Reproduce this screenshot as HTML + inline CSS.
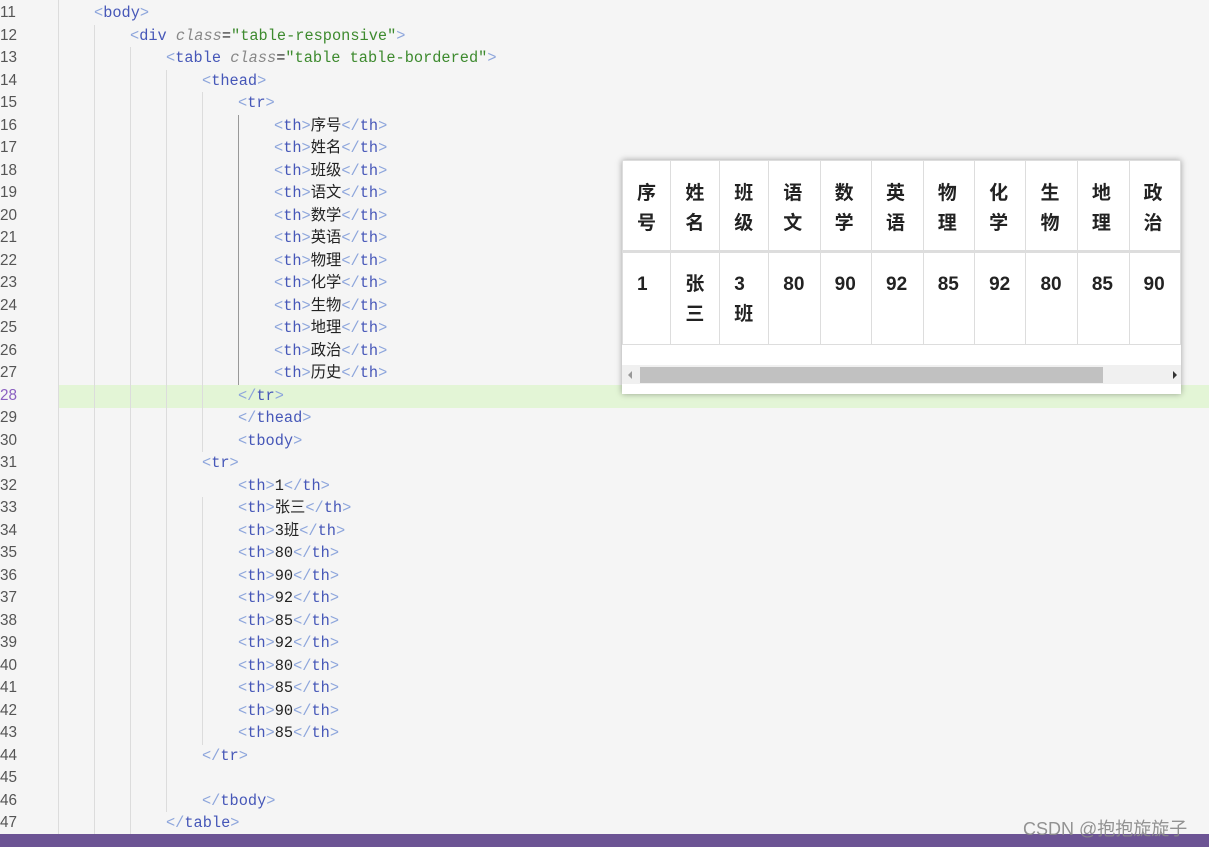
<!DOCTYPE html>
<html><head><meta charset="utf-8"><style>
body{margin:0;width:1209px;height:847px;background:#f5f5f5;overflow:hidden;position:relative;font-family:"Liberation Mono","Noto Sans CJK SC",monospace;}
.ln{position:absolute;left:0;height:22.5px;line-height:22.5px;font-size:15.3px;color:#555;font-family:"Liberation Sans",sans-serif;}
.cl{position:absolute;height:22.5px;line-height:22.5px;font-size:15.3px;color:#222;white-space:pre;}
.b{color:#8ea6dc}.t{color:#4657b8}.a{color:#888;font-style:italic}.s{color:#3d8a2e}
.g{position:absolute;width:1px;background:#dcdcdc}
.hl{position:absolute;left:58px;right:0;top:385px;height:22.5px;background:#e3f5d6}
.panel{position:absolute;left:622px;top:160px;width:559px;height:234px;background:#fff;box-shadow:0 0 6px rgba(0,0,0,.35);overflow:hidden}
table{border-collapse:collapse;position:absolute;left:0;top:0;font-family:"Liberation Sans","Noto Sans CJK SC",sans-serif;font-weight:bold;font-size:19px;color:#222}
td{border:1px solid #ddd;vertical-align:top;padding:18px 14px 0 14px;line-height:30px;box-sizing:border-box}
tr.h td{height:91px;border-bottom:3px solid #ddd}
tr.r td{height:93px;padding-top:17px}
.sb{position:absolute;left:0;top:205px;width:559px;height:19px;background:#f0f0f0}
.th{position:absolute;left:18px;top:2px;width:463px;height:16px;background:#c1c1c1}
.bar{position:absolute;left:0;right:0;top:834px;height:13px;background:#6c5494}
.wm{position:absolute;left:1023px;top:815px;font-family:"Liberation Sans","Noto Sans CJK SC",sans-serif;font-size:18px;color:#888;opacity:.9}
</style></head><body>
<div class="hl"></div>
<div class="g" style="left:58px;top:0;height:834px"></div>
<div class="g" style="left:94px;top:25px;height:809px"></div>
<div class="g" style="left:130px;top:47px;height:787px"></div>
<div class="g" style="left:166px;top:70px;height:742px"></div>
<div class="g" style="left:202px;top:92px;height:360px"></div>
<div class="g" style="left:202px;top:497px;height:248px"></div>
<div class="g" style="left:238px;top:115px;height:270px;background:#999"></div>

<div class="ln" style="top:2px">11</div><div class="cl" style="top:2px;left:94px"><span class="b">&lt;</span><span class="t">body</span><span class="b">&gt;</span></div>
<div class="ln" style="top:24.5px">12</div><div class="cl" style="top:24.5px;left:130px"><span class="b">&lt;</span><span class="t">div</span> <span class="a">class</span>=<span class="s">"table-responsive"</span><span class="b">&gt;</span></div>
<div class="ln" style="top:47px">13</div><div class="cl" style="top:47px;left:166px"><span class="b">&lt;</span><span class="t">table</span> <span class="a">class</span>=<span class="s">"table table-bordered"</span><span class="b">&gt;</span></div>
<div class="ln" style="top:69.5px">14</div><div class="cl" style="top:69.5px;left:202px"><span class="b">&lt;</span><span class="t">thead</span><span class="b">&gt;</span></div>
<div class="ln" style="top:92px">15</div><div class="cl" style="top:92px;left:238px"><span class="b">&lt;</span><span class="t">tr</span><span class="b">&gt;</span></div>
<div class="ln" style="top:114.5px">16</div><div class="cl" style="top:114.5px;left:274px"><span class="b">&lt;</span><span class="t">th</span><span class="b">&gt;</span>序号<span class="b">&lt;/</span><span class="t">th</span><span class="b">&gt;</span></div>
<div class="ln" style="top:137px">17</div><div class="cl" style="top:137px;left:274px"><span class="b">&lt;</span><span class="t">th</span><span class="b">&gt;</span>姓名<span class="b">&lt;/</span><span class="t">th</span><span class="b">&gt;</span></div>
<div class="ln" style="top:159.5px">18</div><div class="cl" style="top:159.5px;left:274px"><span class="b">&lt;</span><span class="t">th</span><span class="b">&gt;</span>班级<span class="b">&lt;/</span><span class="t">th</span><span class="b">&gt;</span></div>
<div class="ln" style="top:182px">19</div><div class="cl" style="top:182px;left:274px"><span class="b">&lt;</span><span class="t">th</span><span class="b">&gt;</span>语文<span class="b">&lt;/</span><span class="t">th</span><span class="b">&gt;</span></div>
<div class="ln" style="top:204.5px">20</div><div class="cl" style="top:204.5px;left:274px"><span class="b">&lt;</span><span class="t">th</span><span class="b">&gt;</span>数学<span class="b">&lt;/</span><span class="t">th</span><span class="b">&gt;</span></div>
<div class="ln" style="top:227px">21</div><div class="cl" style="top:227px;left:274px"><span class="b">&lt;</span><span class="t">th</span><span class="b">&gt;</span>英语<span class="b">&lt;/</span><span class="t">th</span><span class="b">&gt;</span></div>
<div class="ln" style="top:249.5px">22</div><div class="cl" style="top:249.5px;left:274px"><span class="b">&lt;</span><span class="t">th</span><span class="b">&gt;</span>物理<span class="b">&lt;/</span><span class="t">th</span><span class="b">&gt;</span></div>
<div class="ln" style="top:272px">23</div><div class="cl" style="top:272px;left:274px"><span class="b">&lt;</span><span class="t">th</span><span class="b">&gt;</span>化学<span class="b">&lt;/</span><span class="t">th</span><span class="b">&gt;</span></div>
<div class="ln" style="top:294.5px">24</div><div class="cl" style="top:294.5px;left:274px"><span class="b">&lt;</span><span class="t">th</span><span class="b">&gt;</span>生物<span class="b">&lt;/</span><span class="t">th</span><span class="b">&gt;</span></div>
<div class="ln" style="top:317px">25</div><div class="cl" style="top:317px;left:274px"><span class="b">&lt;</span><span class="t">th</span><span class="b">&gt;</span>地理<span class="b">&lt;/</span><span class="t">th</span><span class="b">&gt;</span></div>
<div class="ln" style="top:339.5px">26</div><div class="cl" style="top:339.5px;left:274px"><span class="b">&lt;</span><span class="t">th</span><span class="b">&gt;</span>政治<span class="b">&lt;/</span><span class="t">th</span><span class="b">&gt;</span></div>
<div class="ln" style="top:362px">27</div><div class="cl" style="top:362px;left:274px"><span class="b">&lt;</span><span class="t">th</span><span class="b">&gt;</span>历史<span class="b">&lt;/</span><span class="t">th</span><span class="b">&gt;</span></div>
<div class="ln" style="top:384.5px;color:#8a5fc0">28</div><div class="cl" style="top:384.5px;left:238px"><span class="b">&lt;/</span><span class="t">tr</span><span class="b">&gt;</span></div>
<div class="ln" style="top:407px">29</div><div class="cl" style="top:407px;left:238px"><span class="b">&lt;/</span><span class="t">thead</span><span class="b">&gt;</span></div>
<div class="ln" style="top:429.5px">30</div><div class="cl" style="top:429.5px;left:238px"><span class="b">&lt;</span><span class="t">tbody</span><span class="b">&gt;</span></div>
<div class="ln" style="top:452px">31</div><div class="cl" style="top:452px;left:202px"><span class="b">&lt;</span><span class="t">tr</span><span class="b">&gt;</span></div>
<div class="ln" style="top:474.5px">32</div><div class="cl" style="top:474.5px;left:238px"><span class="b">&lt;</span><span class="t">th</span><span class="b">&gt;</span>1<span class="b">&lt;/</span><span class="t">th</span><span class="b">&gt;</span></div>
<div class="ln" style="top:497px">33</div><div class="cl" style="top:497px;left:238px"><span class="b">&lt;</span><span class="t">th</span><span class="b">&gt;</span>张三<span class="b">&lt;/</span><span class="t">th</span><span class="b">&gt;</span></div>
<div class="ln" style="top:519.5px">34</div><div class="cl" style="top:519.5px;left:238px"><span class="b">&lt;</span><span class="t">th</span><span class="b">&gt;</span>3班<span class="b">&lt;/</span><span class="t">th</span><span class="b">&gt;</span></div>
<div class="ln" style="top:542px">35</div><div class="cl" style="top:542px;left:238px"><span class="b">&lt;</span><span class="t">th</span><span class="b">&gt;</span>80<span class="b">&lt;/</span><span class="t">th</span><span class="b">&gt;</span></div>
<div class="ln" style="top:564.5px">36</div><div class="cl" style="top:564.5px;left:238px"><span class="b">&lt;</span><span class="t">th</span><span class="b">&gt;</span>90<span class="b">&lt;/</span><span class="t">th</span><span class="b">&gt;</span></div>
<div class="ln" style="top:587px">37</div><div class="cl" style="top:587px;left:238px"><span class="b">&lt;</span><span class="t">th</span><span class="b">&gt;</span>92<span class="b">&lt;/</span><span class="t">th</span><span class="b">&gt;</span></div>
<div class="ln" style="top:609.5px">38</div><div class="cl" style="top:609.5px;left:238px"><span class="b">&lt;</span><span class="t">th</span><span class="b">&gt;</span>85<span class="b">&lt;/</span><span class="t">th</span><span class="b">&gt;</span></div>
<div class="ln" style="top:632px">39</div><div class="cl" style="top:632px;left:238px"><span class="b">&lt;</span><span class="t">th</span><span class="b">&gt;</span>92<span class="b">&lt;/</span><span class="t">th</span><span class="b">&gt;</span></div>
<div class="ln" style="top:654.5px">40</div><div class="cl" style="top:654.5px;left:238px"><span class="b">&lt;</span><span class="t">th</span><span class="b">&gt;</span>80<span class="b">&lt;/</span><span class="t">th</span><span class="b">&gt;</span></div>
<div class="ln" style="top:677px">41</div><div class="cl" style="top:677px;left:238px"><span class="b">&lt;</span><span class="t">th</span><span class="b">&gt;</span>85<span class="b">&lt;/</span><span class="t">th</span><span class="b">&gt;</span></div>
<div class="ln" style="top:699.5px">42</div><div class="cl" style="top:699.5px;left:238px"><span class="b">&lt;</span><span class="t">th</span><span class="b">&gt;</span>90<span class="b">&lt;/</span><span class="t">th</span><span class="b">&gt;</span></div>
<div class="ln" style="top:722px">43</div><div class="cl" style="top:722px;left:238px"><span class="b">&lt;</span><span class="t">th</span><span class="b">&gt;</span>85<span class="b">&lt;/</span><span class="t">th</span><span class="b">&gt;</span></div>
<div class="ln" style="top:744.5px">44</div><div class="cl" style="top:744.5px;left:202px"><span class="b">&lt;/</span><span class="t">tr</span><span class="b">&gt;</span></div>
<div class="ln" style="top:767px">45</div>
<div class="ln" style="top:789.5px">46</div><div class="cl" style="top:789.5px;left:202px"><span class="b">&lt;/</span><span class="t">tbody</span><span class="b">&gt;</span></div>
<div class="ln" style="top:812px">47</div><div class="cl" style="top:812px;left:166px"><span class="b">&lt;/</span><span class="t">table</span><span class="b">&gt;</span></div>

<div class="panel">
<table>
<tr class="h"><td style="width:49px">序号</td><td style="width:51px">姓名</td><td style="width:51px">班级</td><td style="width:54px">语文</td><td style="width:54px">数学</td><td style="width:55px">英语</td><td style="width:54px">物理</td><td style="width:54px">化学</td><td style="width:54px">生物</td><td style="width:55px">地理</td><td style="width:54px">政治</td></tr>
<tr class="r"><td>1</td><td>张三</td><td>3班</td><td>80</td><td>90</td><td>92</td><td>85</td><td>92</td><td>80</td><td>85</td><td>90</td></tr>
</table>
<div class="sb"><div class="th"></div>
<div style="position:absolute;left:6px;top:6px;border:4px solid transparent;border-right-color:#999;border-left:0"></div>
<div style="position:absolute;right:4px;top:6px;border:4px solid transparent;border-left-color:#333;border-right:0"></div></div>
</div>
<div class="bar"></div>
<div class="wm">CSDN @抱抱旋旋子</div>
</body></html>
